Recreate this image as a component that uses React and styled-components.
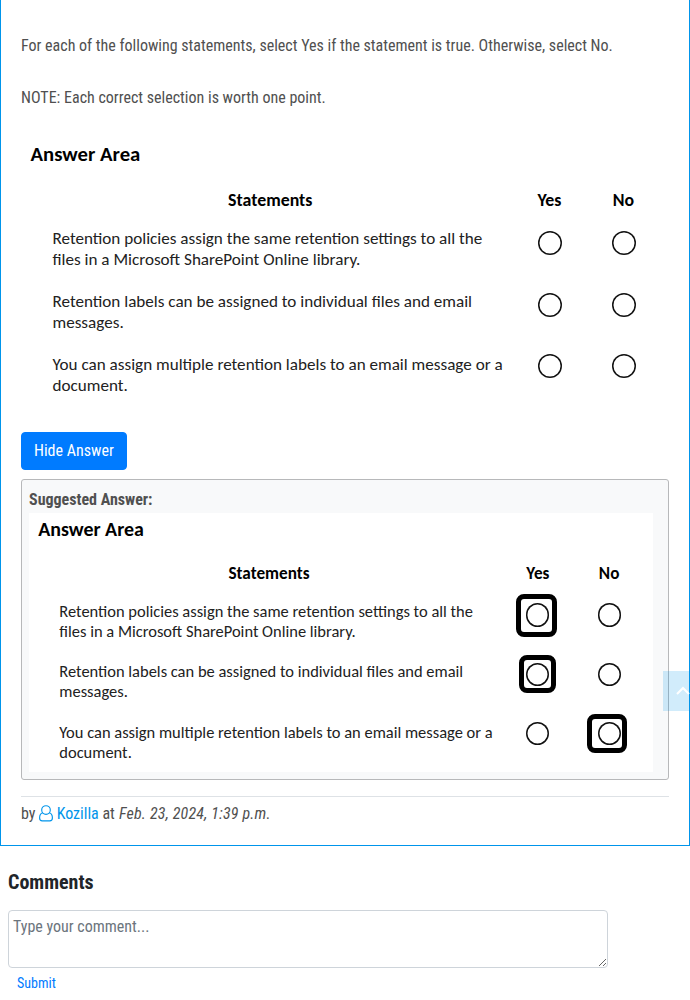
import React from "react";
import styled, { createGlobalStyle } from "styled-components";

const GlobalStyle = createGlobalStyle`
  *, *::before, *::after { box-sizing: border-box; }
  body {
    margin: 0;
    background: #fff;
    color: #212529;
    font: 400 16px/24px "Roboto Condensed", Roboto, "Liberation Sans", sans-serif;
    overflow: hidden;
  }
`;

const Page = styled.div`
  position: relative;
  width: 690px;
  height: 1000px;
  overflow: hidden;
`;

const Card = styled.section`
  height: 846px;
  padding: 34px 20px 0;
  border: 1px solid #0095eb;
  border-top: 0;
  color: #505050;
`;

const Paragraph = styled.p`
  margin: 0 0 28px;
  &:nth-of-type(2) { margin-bottom: 27px; }
`;

const Button = styled.button`
  display: block;
  height: 38px;
  margin: 26px 0 9px;
  padding: 6px 12px;
  border: 1px solid #007bff;
  border-radius: 4px;
  background: #007bff;
  color: #fff;
  font: inherit;
`;

const AnswerBox = styled.div`
  height: 301px;
  padding: 8px 7px 7px;
  border: 1px solid #b7b8ba;
  border-radius: 3px;
  background: #f8f9fa;
`;

const AnswerLabel = styled.strong`
  display: block;
  height: 25px;
  font-weight: 700;
`;

const Exhibit = styled.div`
  font-family: Carlito, Calibri, Lato, sans-serif;
  font-size: ${(p) => p.$width / 64.8}px;
  width: 64.8em;
  height: 26.9em;
  padding: 0.4em 0 0 0.95em;
  background: #fff;
  color: #000;
`;

const ExhibitTitle = styled.div`
  height: 4.65em;
  & > b { font-size: 2.07em; line-height: 1.3; }
`;

const Columns = styled.div`
  display: flex;
  padding-left: 2.2em;
`;

const StatementColumn = styled.div`
  width: 46em;
`;

const ColumnHead = styled.div`
  height: ${(p) => p.$height}em;
  text-align: center;
  & > b { font-size: 1.785em; line-height: 1.38; }
`;

const StatementsHead = styled(ColumnHead)`
  padding-right: 2.45em;
`;

const Statement = styled.p`
  margin: 0;
  height: ${62.8 / 17.12}em;
  font-size: 1.712em;
  line-height: ${20.8 / 17.12};
  color: #222;
  white-space: pre-line;
`;

const OptionColumn = styled.div`
  width: 7.4em;
  display: flex;
  flex-direction: column;
  align-items: center;
`;

const Option = styled.div`
  position: relative;
  width: 2.4em;
  height: 2.4em;
  margin-bottom: 3.77em;
  box-shadow: inset 0 0 0 1.5px #111;
  border-radius: 50%;
`;

const Mark = styled.span`
  position: absolute;
  left: 50%;
  top: 50%;
  width: ${(p) => p.$w}px;
  height: ${(p) => p.$h}px;
  margin: ${(p) => -p.$h / 2 + p.$dy}px 0 0 ${(p) => -p.$w / 2 + p.$dx}px;
  border: 5px solid #000;
  border-radius: 8px;
`;

const Byline = styled.div`
  display: flex;
  margin-top: 16px;
  padding-top: 5px;
  border-top: 1px solid #dee2e6;
  white-space: pre;
`;

const UserLink = styled.a`
  display: inline-flex;
  align-items: center;
  gap: 3.5px;
  color: #0095eb;
  & > svg { margin-top: -2px; }
`;

const PostedAt = styled.em`
  margin-left: 0.5px;
  letter-spacing: 0.19px;
`;

const Comments = styled.section`
  padding: 23px 8px 0;
`;

const CommentsTitle = styled.h2`
  margin: 0 0 15px;
  font-size: 20px;
  line-height: 26px;
  font-weight: 700;
`;

const CommentInput = styled.textarea`
  display: block;
  width: 600px;
  height: 58px;
  padding: 4px;
  border: 1px solid #ced4da;
  border-radius: 4px;
  background: #fff;
  font: inherit;
  resize: vertical;
  overflow: hidden;
  &::placeholder { color: #6c757d; opacity: 1; }
`;

const SubmitLink = styled.button`
  display: block;
  margin: 5px 0 0;
  padding: 0 9px;
  border: 0;
  background: none;
  color: #007bff;
  font: inherit;
  font-size: 14px;
  line-height: 21px;
`;

const ScrollTop = styled.div`
  position: absolute;
  right: -13px;
  top: 671px;
  display: flex;
  align-items: center;
  justify-content: center;
  width: 40px;
  height: 40px;
  background: rgba(0, 149, 235, 0.18);
`;

const STATEMENTS = [
  "Retention policies assign the same retention settings to all the\nfiles in a Microsoft SharePoint Online library.",
  "Retention labels can be assigned to individual files and email\nmessages.",
  "You can assign multiple retention labels to an email message or a\ndocument.",
];

const ANSWERS = {
  Yes: [{ w: 41, h: 43, dx: -1.5, dy: 0 }, { w: 37, h: 38, dx: -0.5, dy: 0 }, null],
  No: [null, null, { w: 40, h: 39, dx: -2, dy: 0 }],
};

function AnswerArea({ width, answers, textTop }) {
  return (
    <Exhibit $width={width}>
      <ExhibitTitle><b>Answer Area</b></ExhibitTitle>
      <Columns>
        <StatementColumn>
          <StatementsHead $height={textTop}><b>Statements</b></StatementsHead>
          {STATEMENTS.map((text) => <Statement key={text}>{text}</Statement>)}
        </StatementColumn>
        {["Yes", "No"].map((name) => (
          <OptionColumn key={name}>
            <ColumnHead $height={4.35}><b>{name}</b></ColumnHead>
            {STATEMENTS.map((text, i) => {
              const mark = answers && answers[name][i];
              return (
                <Option key={text}>
                  {mark && <Mark $w={mark.w} $h={mark.h} $dx={mark.dx} $dy={mark.dy} />}
                </Option>
              );
            })}
          </OptionColumn>
        ))}
      </Columns>
    </Exhibit>
  );
}

export default function App() {
  return (
    <Page>
      <GlobalStyle />
      <Card>
        <Paragraph>
          For each of the following statements, select Yes if the statement is true. Otherwise, select No.
        </Paragraph>
        <Paragraph>NOTE: Each correct selection is worth one point.</Paragraph>
        <AnswerArea width={648} textTop={4.17} />
        <Button>Hide Answer</Button>
        <AnswerBox>
          <AnswerLabel>Suggested Answer:</AnswerLabel>
          <AnswerArea width={624} textTop={4.05} answers={ANSWERS} />
        </AnswerBox>
        <Byline>
          {"by "}
          <UserLink>
            <svg width="14" height="17" viewBox="0 0 14 17" fill="none" stroke="currentColor" strokeWidth="1.15">
              <circle cx="7" cy="5" r="4.3" />
              <path d="M3.7 7.8 C1.6 8.4 0.6 10.5 0.6 13 C0.6 14.7 1.7 15.9 3.2 15.9 H10.8 C12.3 15.9 13.4 14.7 13.4 13 C13.4 10.5 12.4 8.4 10.3 7.8" />
            </svg>
            Kozilla
          </UserLink>
          {" at "}
          <PostedAt>Feb. 23, 2024, 1:39 p.m.</PostedAt>
        </Byline>
      </Card>
      <Comments>
        <CommentsTitle>Comments</CommentsTitle>
        <CommentInput placeholder="Type your comment..." />
        <SubmitLink>Submit</SubmitLink>
      </Comments>
      <ScrollTop>
        <svg width="14" height="10" viewBox="0 0 14 10" fill="none" stroke="#fff" strokeWidth="2">
          <path d="M1 8l6-6 6 6" />
        </svg>
      </ScrollTop>
    </Page>
  );
}
